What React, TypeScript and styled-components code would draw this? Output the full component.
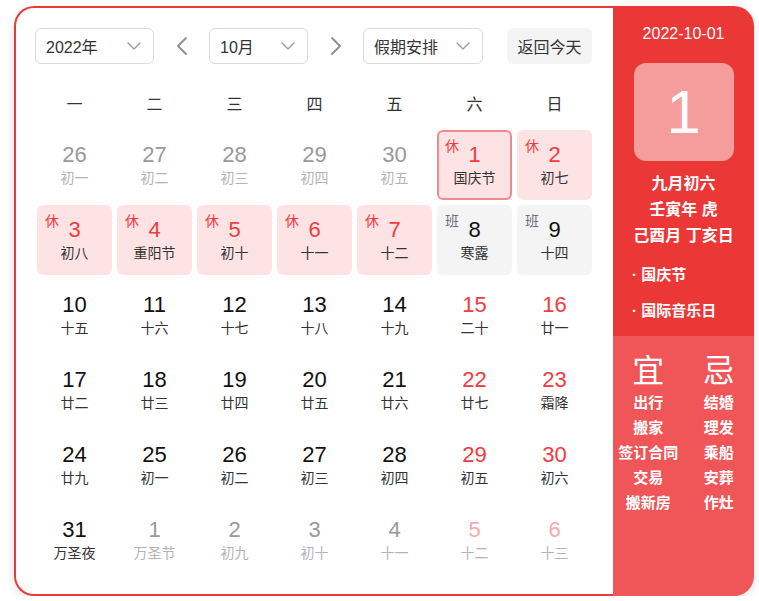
import React from "react";
import styled, { createGlobalStyle } from "styled-components";

const Global = createGlobalStyle`
  html, body { margin: 0; padding: 0; background: #fff; }
  body { font-family: "Liberation Sans", "Noto Sans CJK SC", sans-serif; }
`;

const Page = styled.div`
  padding: 6px 0 0 14px;
`;

const Card = styled.div`
  display: flex;
  width: 740px;
  height: 590px;
  border-radius: 20px;
  box-shadow: 0 3px 10px rgba(0, 0, 0, 0.12);
`;

const Main = styled.div`
  flex: 1;
  box-sizing: border-box;
  border: 2px solid #e9393b;
  border-right: none;
  border-radius: 20px 0 0 20px;
  padding: 20px 21px 0 19px;
  background: #fff;
`;

const Toolbar = styled.div`
  display: flex;
  align-items: center;
  height: 36px;
`;

const Select = styled.div<{ $w: number }>`
  box-sizing: border-box;
  width: ${(p) => p.$w}px;
  height: 36px;
  border: 1px solid #d9d9e1;
  border-radius: 6px;
  display: flex;
  align-items: center;
  justify-content: space-between;
  padding: 0 12px 0 10px;
  font-size: 16px;
  color: #333;
`;

const ArrowBtn = styled.div`
  width: 55px;
  display: flex;
  justify-content: center;
  align-items: center;
`;

const TodayBtn = styled.div`
  margin-left: auto;
  width: 85px;
  height: 36px;
  border-radius: 6px;
  background: #f4f4f5;
  display: flex;
  align-items: center;
  justify-content: center;
  font-size: 16px;
  color: #333;
`;

const Weekdays = styled.div`
  display: grid;
  grid-template-columns: repeat(7, 75px);
  column-gap: 5px;
  margin: 26px 0 10px 2px;
  height: 30px;
`;

const Weekday = styled.div`
  text-align: center;
  line-height: 30px;
  font-size: 16px;
  color: #333;
`;

const Grid = styled.div`
  display: grid;
  grid-template-columns: repeat(7, 75px);
  grid-auto-rows: 70px;
  gap: 5px;
  margin-left: 2px;
`;

type Kind = "rest" | "work" | "none";
type Tone = "normal" | "gray" | "red" | "pink";

const Cell = styled.div<{ $kind: Kind; $sel?: boolean }>`
  position: relative;
  box-sizing: border-box;
  border-radius: 6px;
  background: ${(p) =>
    p.$kind === "rest" ? "#fde3e3" : p.$kind === "work" ? "#f4f4f5" : "transparent"};
  border: 2px solid ${(p) => (p.$sel ? "#f08b8b" : "transparent")};
  display: flex;
  flex-direction: column;
  align-items: center;
  padding-top: 10px;
`;

const numColor: Record<Tone, string> = {
  normal: "#111",
  gray: "#999",
  red: "#f33a3f",
  pink: "#f8a9a9",
};
const lunarColor: Record<Tone, string> = {
  normal: "#333",
  gray: "#b4b4b4",
  red: "#333",
  pink: "#b4b4b4",
};

const Num = styled.div<{ $tone: Tone }>`
  font-size: 22px;
  line-height: 26px;
  color: ${(p) => numColor[p.$tone]};
`;

const Lunar = styled.div<{ $tone: Tone }>`
  font-size: 14px;
  line-height: 20px;
  color: ${(p) => lunarColor[p.$tone]};
`;

const Tag = styled.span<{ $kind: Kind }>`
  position: absolute;
  top: 4px;
  left: 6px;
  font-size: 14px;
  line-height: 20px;
  color: ${(p) => (p.$kind === "rest" ? "#f33a3f" : "#6d6d80")};
`;

const Side = styled.div`
  width: 141px;
  border-radius: 0 20px 20px 0;
  overflow: hidden;
  display: flex;
  flex-direction: column;
  color: #fff;
`;

const SideTop = styled.div`
  background: #ec3737;
  padding: 16px 0 7px;
  display: flex;
  flex-direction: column;
  align-items: center;
`;

const SideDate = styled.div`
  font-size: 16px;
  line-height: 24px;
`;

const BigDay = styled.div`
  margin-top: 17px;
  width: 100px;
  height: 98px;
  border-radius: 12px;
  background: #f59c9c;
  display: flex;
  align-items: center;
  justify-content: center;
  font-size: 62px;
  line-height: 1;
`;

const LunarBlock = styled.div`
  margin-top: 10px;
  text-align: center;
  font-size: 16px;
  line-height: 26px;
  font-weight: 600;
`;

const Festivals = styled.div`
  margin-top: 8px;
  align-self: stretch;
  padding-left: 19px;
`;

const Festival = styled.div`
  font-size: 15px;
  line-height: 36px;
  font-weight: 600;
`;

const SideBottom = styled.div`
  flex: 1;
  background: #f05657;
  padding-top: 16px;
  display: grid;
  grid-template-columns: 1fr 1fr;
  align-content: start;
`;

const YiJiCol = styled.div`
  display: flex;
  flex-direction: column;
  align-items: center;
`;

const YiJiTitle = styled.div`
  font-size: 32px;
  line-height: 38px;
`;

const YiJiItem = styled.div`
  font-size: 15px;
  line-height: 25px;
  font-weight: 600;
  white-space: nowrap;
`;

const Chevron = () => (
  <svg width="14" height="8" viewBox="0 0 14 8" fill="none">
    <polyline points="1,1 7,7 13,1" stroke="#9a9aa8" strokeWidth="1.4" strokeLinecap="round" strokeLinejoin="round" />
  </svg>
);

const Arrow = ({ dir }: { dir: "left" | "right" }) => (
  <svg width="12" height="20" viewBox="0 0 12 20" fill="none">
    <polyline
      points={dir === "left" ? "10,2 2,10 10,18" : "2,2 10,10 2,18"}
      stroke="#8c8c9b"
      strokeWidth="1.8"
      strokeLinecap="round"
      strokeLinejoin="round"
    />
  </svg>
);

type Day = { n: number; l: string; t: Tone; k?: Kind; sel?: boolean };

const g = (n: number, l: string): Day => ({ n, l, t: "gray" });
const d = (n: number, l: string): Day => ({ n, l, t: "normal" });
const r = (n: number, l: string): Day => ({ n, l, t: "red" });
const p = (n: number, l: string): Day => ({ n, l, t: "pink" });
const rest = (n: number, l: string): Day => ({ n, l, t: "red", k: "rest" });
const work = (n: number, l: string): Day => ({ n, l, t: "normal", k: "work" });

const days: Day[] = [
  g(26, "初一"), g(27, "初二"), g(28, "初三"), g(29, "初四"), g(30, "初五"),
  { ...rest(1, "国庆节"), sel: true }, rest(2, "初七"),
  rest(3, "初八"), rest(4, "重阳节"), rest(5, "初十"), rest(6, "十一"), rest(7, "十二"),
  work(8, "寒露"), work(9, "十四"),
  d(10, "十五"), d(11, "十六"), d(12, "十七"), d(13, "十八"), d(14, "十九"), r(15, "二十"), r(16, "廿一"),
  d(17, "廿二"), d(18, "廿三"), d(19, "廿四"), d(20, "廿五"), d(21, "廿六"), r(22, "廿七"), r(23, "霜降"),
  d(24, "廿九"), d(25, "初一"), d(26, "初二"), d(27, "初三"), d(28, "初四"), r(29, "初五"), r(30, "初六"),
  { ...d(31, "万圣夜") }, g(1, "万圣节"), g(2, "初九"), g(3, "初十"), g(4, "十一"), p(5, "十二"), p(6, "十三"),
];

const weekdays = ["一", "二", "三", "四", "五", "六", "日"];
const yi = ["出行", "搬家", "签订合同", "交易", "搬新房"];
const ji = ["结婚", "理发", "乘船", "安葬", "作灶"];

export default function App() {
  return (
    <>
      <Global />
      <Page>
        <Card>
          <Main>
            <Toolbar>
              <Select $w={119}>
                <span>2022年</span>
                <Chevron />
              </Select>
              <ArrowBtn>
                <Arrow dir="left" />
              </ArrowBtn>
              <Select $w={99}>
                <span>10月</span>
                <Chevron />
              </Select>
              <ArrowBtn>
                <Arrow dir="right" />
              </ArrowBtn>
              <Select $w={120}>
                <span>假期安排</span>
                <Chevron />
              </Select>
              <TodayBtn>返回今天</TodayBtn>
            </Toolbar>
            <Weekdays>
              {weekdays.map((w) => (
                <Weekday key={w}>{w}</Weekday>
              ))}
            </Weekdays>
            <Grid>
              {days.map((day, i) => {
                const kind: Kind = day.k ?? "none";
                return (
                  <Cell key={i} $kind={kind} $sel={day.sel}>
                    {kind !== "none" && <Tag $kind={kind}>{kind === "rest" ? "休" : "班"}</Tag>}
                    <Num $tone={day.t}>{day.n}</Num>
                    <Lunar $tone={day.t}>{day.l}</Lunar>
                  </Cell>
                );
              })}
            </Grid>
          </Main>
          <Side>
            <SideTop>
              <SideDate>2022-10-01</SideDate>
              <BigDay>1</BigDay>
              <LunarBlock>
                <div>九月初六</div>
                <div>壬寅年 虎</div>
                <div>己酉月 丁亥日</div>
              </LunarBlock>
              <Festivals>
                <Festival>· 国庆节</Festival>
                <Festival>· 国际音乐日</Festival>
              </Festivals>
            </SideTop>
            <SideBottom>
              <YiJiCol>
                <YiJiTitle>宜</YiJiTitle>
                {yi.map((x) => (
                  <YiJiItem key={x}>{x}</YiJiItem>
                ))}
              </YiJiCol>
              <YiJiCol>
                <YiJiTitle>忌</YiJiTitle>
                {ji.map((x) => (
                  <YiJiItem key={x}>{x}</YiJiItem>
                ))}
              </YiJiCol>
            </SideBottom>
          </Side>
        </Card>
      </Page>
    </>
  );
}
